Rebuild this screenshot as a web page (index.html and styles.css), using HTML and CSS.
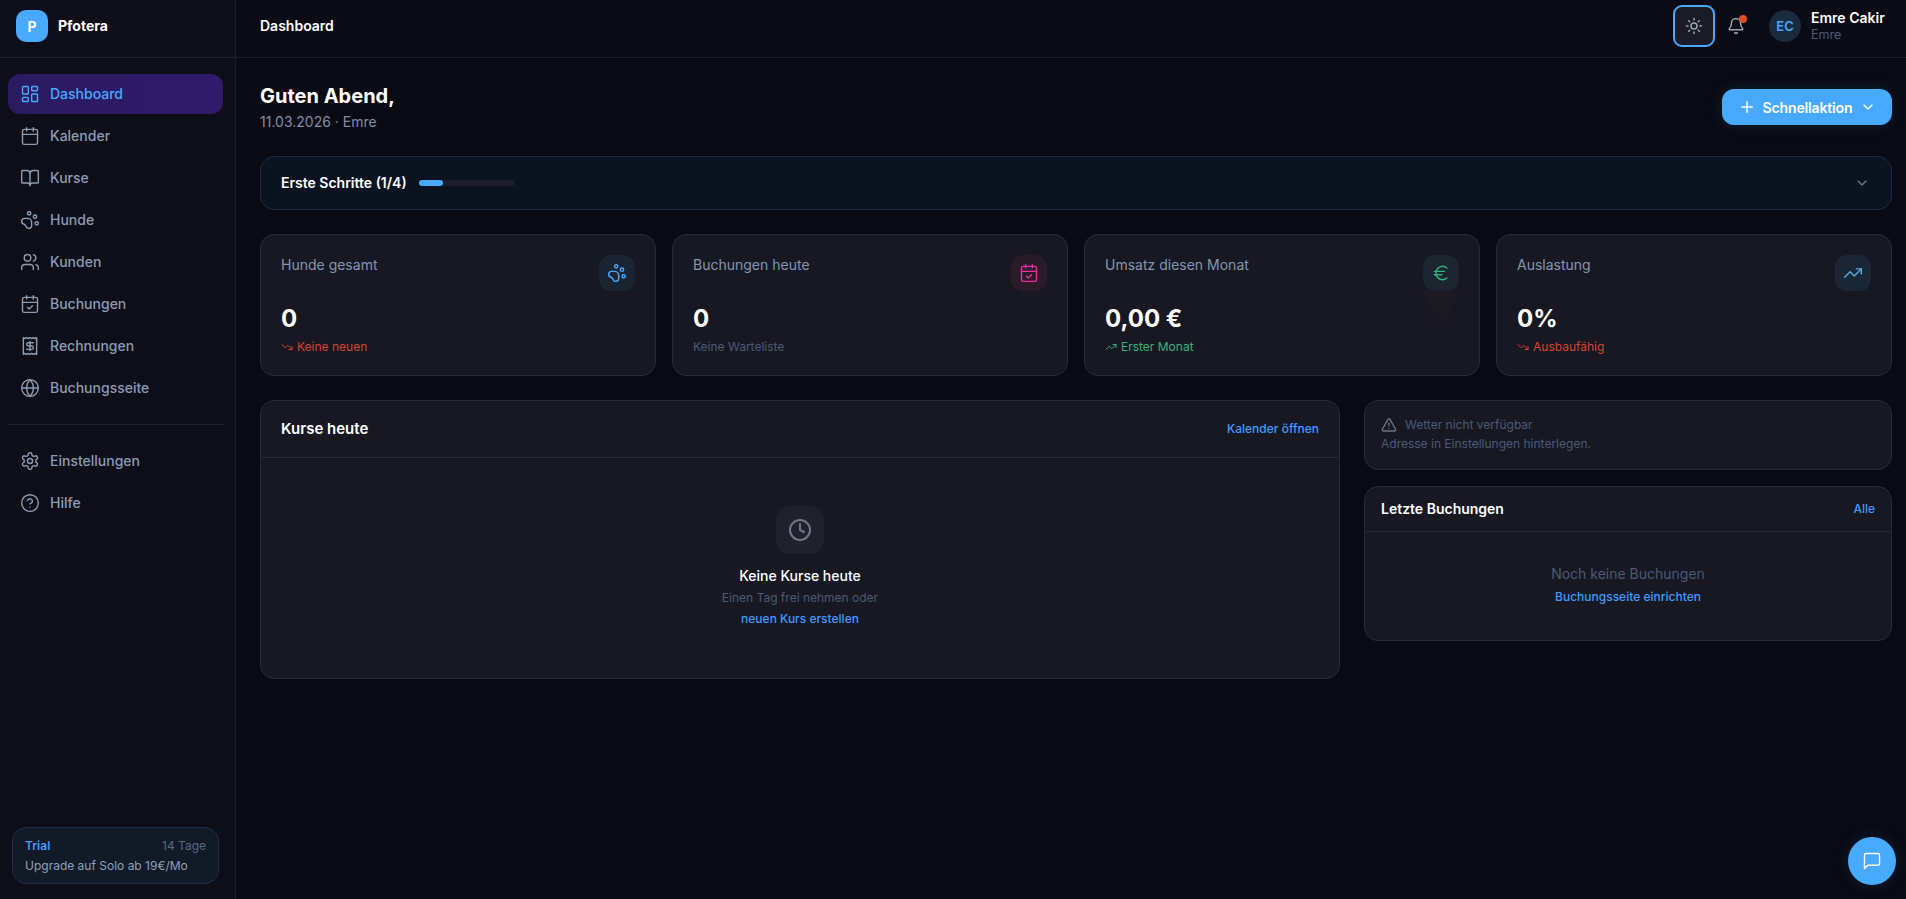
FILE: index.html
```html
<!DOCTYPE html>
<html lang="de">
<head>
<meta charset="utf-8">
<title>Pfotera – Dashboard</title>
<link rel="stylesheet" href="styles.css">
</head>
<body>
<svg class="defs" width="0" height="0" aria-hidden="true">
  <symbol id="i-dash" viewBox="0 0 24 24"><rect x="3" y="3" width="7" height="9" rx="1"/><rect x="14" y="3" width="7" height="5" rx="1"/><rect x="14" y="12" width="7" height="9" rx="1"/><rect x="3" y="16" width="7" height="5" rx="1"/></symbol>
  <symbol id="i-cal" viewBox="0 0 24 24"><path d="M8 2v4"/><path d="M16 2v4"/><rect x="3" y="4" width="18" height="18" rx="2"/><path d="M3 10h18"/></symbol>
  <symbol id="i-book" viewBox="0 0 24 24"><path d="M12 7v14"/><path d="M3 18a1 1 0 0 1-1-1V4a1 1 0 0 1 1-1h5a4 4 0 0 1 4 4 4 4 0 0 1 4-4h5a1 1 0 0 1 1 1v13a1 1 0 0 1-1 1h-6a3 3 0 0 0-3 3 3 3 0 0 0-3-3z"/></symbol>
  <symbol id="i-paw" viewBox="0 0 24 24"><circle cx="11" cy="4" r="2"/><circle cx="18" cy="8" r="2"/><circle cx="20" cy="16" r="2"/><path d="M9 10a5 5 0 0 1 5 5v3.5a3.5 3.5 0 0 1-6.84 1.045Q6.52 17.48 4.46 16.84A3.5 3.5 0 0 1 5.5 10Z"/></symbol>
  <symbol id="i-users" viewBox="0 0 24 24"><path d="M16 21v-2a4 4 0 0 0-4-4H6a4 4 0 0 0-4 4v2"/><circle cx="9" cy="7" r="4"/><path d="M22 21v-2a4 4 0 0 0-3-3.87"/><path d="M16 3.13a4 4 0 0 1 0 7.75"/></symbol>
  <symbol id="i-calcheck" viewBox="0 0 24 24"><path d="M8 2v4"/><path d="M16 2v4"/><rect x="3" y="4" width="18" height="18" rx="2"/><path d="M3 10h18"/><path d="m9 16 2 2 4-4"/></symbol>
  <symbol id="i-receipt" viewBox="0 0 24 24"><path d="M4 2v20l2-1 2 1 2-1 2 1 2-1 2 1 2-1 2 1V2l-2 1-2-1-2 1-2-1-2 1-2-1-2 1Z"/><path d="M16 8h-6a2 2 0 1 0 0 4h4a2 2 0 1 1 0 4H8"/><path d="M12 17.5v-11"/></symbol>
  <symbol id="i-globe" viewBox="0 0 24 24"><circle cx="12" cy="12" r="10"/><path d="M12 2a14.5 14.5 0 0 0 0 20 14.5 14.5 0 0 0 0-20"/><path d="M2 12h20"/></symbol>
  <symbol id="i-gear" viewBox="0 0 24 24"><path d="M12.22 2h-.44a2 2 0 0 0-2 2v.18a2 2 0 0 1-1 1.73l-.43.25a2 2 0 0 1-2 0l-.15-.08a2 2 0 0 0-2.73.73l-.22.38a2 2 0 0 0 .73 2.73l.15.1a2 2 0 0 1 1 1.72v.51a2 2 0 0 1-1 1.74l-.15.09a2 2 0 0 0-.73 2.73l.22.38a2 2 0 0 0 2.73.73l.15-.08a2 2 0 0 1 2 0l.43.25a2 2 0 0 1 1 1.73V20a2 2 0 0 0 2 2h.44a2 2 0 0 0 2-2v-.18a2 2 0 0 1 1-1.73l.43-.25a2 2 0 0 1 2 0l.15.08a2 2 0 0 0 2.73-.73l.22-.39a2 2 0 0 0-.73-2.73l-.15-.08a2 2 0 0 1-1-1.74v-.5a2 2 0 0 1 1-1.74l.15-.09a2 2 0 0 0 .73-2.73l-.22-.38a2 2 0 0 0-2.73-.73l-.15.08a2 2 0 0 1-2 0l-.43-.25a2 2 0 0 1-1-1.73V4a2 2 0 0 0-2-2z"/><circle cx="12" cy="12" r="3"/></symbol>
  <symbol id="i-help" viewBox="0 0 24 24"><circle cx="12" cy="12" r="10"/><path d="M9.09 9a3 3 0 0 1 5.83 1c0 2-3 3-3 3"/><path d="M12 17h.01"/></symbol>
  <symbol id="i-sun" viewBox="0 0 24 24"><circle cx="12" cy="12" r="4"/><path d="M12 2v2"/><path d="M12 20v2"/><path d="m4.93 4.93 1.41 1.41"/><path d="m17.66 17.66 1.41 1.41"/><path d="M2 12h2"/><path d="M20 12h2"/><path d="m6.34 17.66-1.41 1.41"/><path d="m19.07 4.93-1.41 1.41"/></symbol>
  <symbol id="i-bell" viewBox="0 0 24 24"><path d="M10.268 21a2 2 0 0 0 3.464 0"/><path d="M3.262 15.326A1 1 0 0 0 4 17h16a1 1 0 0 0 .74-1.673C19.41 13.956 18 12.499 18 8A6 6 0 0 0 6 8c0 4.499-1.411 5.956-2.738 7.326"/></symbol>
  <symbol id="i-plus" viewBox="0 0 24 24"><path d="M5 12h14"/><path d="M12 5v14"/></symbol>
  <symbol id="i-chev" viewBox="0 0 24 24"><path d="m6 9 6 6 6-6"/></symbol>
  <symbol id="i-up" viewBox="0 0 24 24"><path d="M16 7h6v6"/><path d="m22 7-8.5 8.5-5-5L2 17"/></symbol>
  <symbol id="i-down" viewBox="0 0 24 24"><path d="M16 17h6v-6"/><path d="m22 17-8.5-8.5-5 5L2 7"/></symbol>
  <symbol id="i-euro" viewBox="0 0 24 24"><path d="M4 10h12"/><path d="M4 14h9"/><path d="M19 6a7.7 7.7 0 0 0-5.2-2A7.9 7.9 0 0 0 6 12c0 4.4 3.5 8 7.8 8 2 0 3.8-.8 5.2-2"/></symbol>
  <symbol id="i-clock" viewBox="0 0 24 24"><circle cx="12" cy="12" r="10"/><path d="M12 6v6l4 2"/></symbol>
  <symbol id="i-alert" viewBox="0 0 24 24"><path d="m21.73 18-8-14a2 2 0 0 0-3.48 0l-8 14A2 2 0 0 0 4 21h16a2 2 0 0 0 1.73-3"/><path d="M12 9v4"/><path d="M12 17h.01"/></symbol>
  <symbol id="i-msg" viewBox="0 0 24 24"><path d="M21 15a2 2 0 0 1-2 2H7l-4 4V5a2 2 0 0 1 2-2h14a2 2 0 0 1 2 2z"/></symbol>
</svg>

<div class="app">
  <aside class="sidebar">
    <div class="brand">
      <span class="brand-logo">P</span>
      <span class="brand-name">Pfotera</span>
    </div>
    <div class="side-body">
      <nav class="nav">
        <a class="nav-item is-active"><svg class="icon icon-20"><use href="#i-dash"/></svg>Dashboard</a>
        <a class="nav-item"><svg class="icon icon-20"><use href="#i-cal"/></svg>Kalender</a>
        <a class="nav-item"><svg class="icon icon-20"><use href="#i-book"/></svg>Kurse</a>
        <a class="nav-item"><svg class="icon icon-20"><use href="#i-paw"/></svg>Hunde</a>
        <a class="nav-item"><svg class="icon icon-20"><use href="#i-users"/></svg>Kunden</a>
        <a class="nav-item"><svg class="icon icon-20"><use href="#i-calcheck"/></svg>Buchungen</a>
        <a class="nav-item"><svg class="icon icon-20"><use href="#i-receipt"/></svg>Rechnungen</a>
        <a class="nav-item"><svg class="icon icon-20"><use href="#i-globe"/></svg>Buchungsseite</a>
      </nav>
      <div class="nav-divider"></div>
      <nav class="nav">
        <a class="nav-item"><svg class="icon icon-20"><use href="#i-gear"/></svg>Einstellungen</a>
        <a class="nav-item"><svg class="icon icon-20"><use href="#i-help"/></svg>Hilfe</a>
      </nav>
      <div class="trial">
        <div class="trial-top"><strong>Trial</strong><span>14 Tage</span></div>
        <div class="trial-text">Upgrade auf Solo ab 19€/Mo</div>
      </div>
    </div>
  </aside>

  <div class="main">
    <header class="topbar">
      <div class="topbar-title">Dashboard</div>
      <div class="topbar-actions">
        <button class="theme-btn"><svg class="icon icon-18"><use href="#i-sun"/></svg></button>
        <button class="bell-btn"><svg class="icon icon-18"><use href="#i-bell"/></svg><span class="bell-dot"></span></button>
        <div class="user">
          <span class="avatar">EC</span>
          <div class="user-text">
            <div class="user-name">Emre Cakir</div>
            <div class="user-sub">Emre</div>
          </div>
        </div>
      </div>
    </header>

    <main class="content">
      <section class="greeting">
        <div>
          <h1>Guten Abend,</h1>
          <p>11.03.2026 · Emre</p>
        </div>
        <button class="quick-btn">
          <svg class="icon icon-18"><use href="#i-plus"/></svg>
          <span class="quick-label">Schnellaktion</span>
          <svg class="icon icon-16"><use href="#i-chev"/></svg>
        </button>
      </section>

      <section class="onboarding">
        <div class="onboarding-left">
          <span class="onboarding-title">Erste Schritte (1/4)</span>
          <span class="progress"><span class="progress-fill"></span></span>
        </div>
        <svg class="icon icon-16 onboarding-chev"><use href="#i-chev"/></svg>
      </section>

      <section class="stats">
        <article class="stat">
          <div class="stat-head"><span class="stat-title">Hunde gesamt</span><span class="stat-icon tone-blue"><svg class="icon icon-20"><use href="#i-paw"/></svg></span></div>
          <div class="stat-value">0</div>
          <div class="stat-sub sub-red"><svg class="icon icon-12"><use href="#i-down"/></svg>Keine neuen</div>
        </article>
        <article class="stat">
          <div class="stat-head"><span class="stat-title">Buchungen heute</span><span class="stat-icon tone-pink"><svg class="icon icon-20"><use href="#i-calcheck"/></svg></span></div>
          <div class="stat-value">0</div>
          <div class="stat-sub sub-muted">Keine Warteliste</div>
        </article>
        <article class="stat">
          <div class="stat-head"><span class="stat-title">Umsatz diesen Monat</span><span class="stat-icon tone-green"><svg class="icon icon-20"><use href="#i-euro"/></svg></span></div>
          <div class="stat-value">0,00 €</div>
          <div class="stat-sub sub-green"><svg class="icon icon-12"><use href="#i-up"/></svg>Erster Monat</div>
        </article>
        <article class="stat">
          <div class="stat-head"><span class="stat-title">Auslastung</span><span class="stat-icon tone-sky"><svg class="icon icon-20"><use href="#i-up"/></svg></span></div>
          <div class="stat-value">0%</div>
          <div class="stat-sub sub-red"><svg class="icon icon-12"><use href="#i-down"/></svg>Ausbaufähig</div>
        </article>
      </section>

      <section class="panels">
        <article class="card">
          <div class="card-head card-head-lg">
            <h2>Kurse heute</h2>
            <a class="link">Kalender öffnen</a>
          </div>
          <div class="empty">
            <span class="empty-icon"><svg class="icon icon-24"><use href="#i-clock"/></svg></span>
            <div class="empty-title">Keine Kurse heute</div>
            <div class="empty-sub">Einen Tag frei nehmen oder</div>
            <a class="link empty-link">neuen Kurs erstellen</a>
          </div>
        </article>

        <div class="side-col">
          <article class="card weather">
            <div class="weather-top"><svg class="icon icon-16"><use href="#i-alert"/></svg>Wetter nicht verfügbar</div>
            <div class="weather-sub">Adresse in Einstellungen hinterlegen.</div>
          </article>
          <article class="card">
            <div class="card-head card-head-sm">
              <h3>Letzte Buchungen</h3>
              <a class="link">Alle</a>
            </div>
            <div class="bookings-empty">
              <div class="bookings-text">Noch keine Buchungen</div>
              <a class="link bookings-link">Buchungsseite einrichten</a>
            </div>
          </article>
        </div>
      </section>
    </main>
  </div>
</div>

<button class="chat-btn"><svg class="icon icon-20"><use href="#i-msg"/></svg></button>
</body>
</html>
```

FILE: styles.css
```css
* { box-sizing: border-box; }

html, body {
  margin: 0;
  height: 100%;
}

body {
  background: #090a13;
  color: #fff;
  font-family: Inter, "Liberation Sans", sans-serif;
  font-size: 14px;
  overflow: hidden;
}

button {
  font: inherit;
  border: 0;
  padding: 0;
  color: inherit;
  background: none;
}

.defs { position: absolute; }

.icon {
  flex: none;
  display: block;
  fill: none;
  stroke: currentColor;
  stroke-width: 2;
  stroke-linecap: round;
  stroke-linejoin: round;
}
.icon-12 { width: 12px; height: 12px; }
.icon-16 { width: 16px; height: 16px; }
.icon-18 { width: 18px; height: 18px; }
.icon-20 { width: 20px; height: 20px; stroke-width: 1.7; }
.icon-24 { width: 24px; height: 24px; }

.app {
  display: flex;
  height: 100vh;
}

/* Sidebar */
.sidebar {
  flex: 0 0 236px;
  display: flex;
  flex-direction: column;
  background: #0d0e17;
  border-right: 1px solid #1c1d28;
}

.brand {
  height: 58px;
  flex: none;
  display: flex;
  align-items: center;
  gap: 10px;
  padding: 0 0 5px 16px;
  border-bottom: 1px solid #20212c;
}

.brand-logo {
  width: 32px;
  height: 32px;
  border-radius: 10px;
  background: #47aaff;
  display: flex;
  align-items: center;
  justify-content: center;
  font-weight: 700;
  font-size: 14px;
}

.brand-name {
  margin-bottom: 2px;
  font-weight: 700;
  font-size: 14px;
}

.side-body {
  flex: 1;
  display: flex;
  flex-direction: column;
  padding: 16px 12px 15px 8px;
}

.nav {
  display: flex;
  flex-direction: column;
  gap: 2px;
}

.nav-item {
  height: 40px;
  display: flex;
  align-items: center;
  gap: 10px;
  padding: 0 12px 1px;
  border-radius: 12px;
  color: #8b9bb4;
  font-weight: 500;
  font-size: 14px;
}

.nav-item.is-active {
  color: #47aaff;
  background: linear-gradient(90deg, #2a1b60, #301a6b);
}

.nav-divider {
  height: 1px;
  background: #20212c;
  margin: 16px 0;
}

.trial {
  margin: auto 4px 0;
  height: 57px;
  padding: 10px 12px;
  border-radius: 14px;
  background: #121a28;
  border: 1px solid #1b2e47;
  font-size: 12px;
}

.trial-top {
  display: flex;
  justify-content: space-between;
  line-height: 16px;
  color: #5a6780;
}

.trial-top strong {
  color: #3f9bff;
  font-weight: 600;
}

.trial-text {
  margin-top: 4px;
  line-height: 16px;
  color: #8ba0bd;
}

/* Top bar */
.main {
  flex: 1;
  min-width: 0;
  display: flex;
  flex-direction: column;
}

.topbar {
  height: 58px;
  flex: none;
  display: flex;
  align-items: center;
  justify-content: space-between;
  padding: 0 14px 5px 24px;
  background: #0a0b14;
  border-bottom: 1px solid #1c1d28;
}

.topbar-title {
  margin-bottom: 2px;
  font-weight: 600;
  font-size: 14px;
}

.topbar-actions {
  display: flex;
  align-items: center;
}

.theme-btn {
  width: 42px;
  height: 42px;
  display: flex;
  align-items: center;
  justify-content: center;
  border-radius: 9px;
  border: 2px solid #47aaff;
  background: #1a1b26;
  color: #9aa6b8;
}

.bell-btn {
  position: relative;
  width: 36px;
  height: 36px;
  margin-left: 3px;
  display: flex;
  align-items: center;
  justify-content: center;
  color: #9aa6b8;
}

.bell-dot {
  position: absolute;
  top: 7px;
  right: 7px;
  width: 8px;
  height: 8px;
  border-radius: 50%;
  background: #d9502e;
}

.user {
  display: flex;
  align-items: center;
  gap: 10px;
  margin-left: 15px;
  width: 123px;
}

.avatar {
  width: 32px;
  height: 32px;
  border-radius: 50%;
  background: #1a2a3f;
  color: #47aaff;
  display: flex;
  align-items: center;
  justify-content: center;
  font-weight: 600;
  font-size: 13px;
}

.user-name {
  font-weight: 600;
  font-size: 14px;
  line-height: 17px;
}

.user-sub {
  margin-top: 1px;
  font-size: 12.5px;
  line-height: 16px;
  color: #4d5a78;
}

/* Content */
.content {
  flex: 1;
  display: flex;
  flex-direction: column;
  gap: 24px;
  padding: 24px 14px 0 24px;
}

.greeting {
  display: flex;
  align-items: center;
  justify-content: space-between;
}

.greeting h1 {
  margin: 0;
  font-size: 20px;
  line-height: 28px;
  font-weight: 700;
}

.greeting p {
  margin: 2px 0 0;
  font-size: 14px;
  line-height: 20px;
  color: #7f8ea5;
}

.quick-btn {
  width: 170px;
  height: 36px;
  display: flex;
  align-items: center;
  justify-content: center;
  gap: 8px;
  border-radius: 12px;
  background: #47aaff;
  color: #fff;
  font-weight: 600;
  font-size: 14px;
  box-shadow: 0 0 14px rgba(71, 170, 255, .16);
}

.quick-label {
  margin-left: -1px;
  letter-spacing: -.15px;
}

.onboarding {
  height: 54px;
  display: flex;
  align-items: center;
  justify-content: space-between;
  padding: 0 21px 1px 20px;
  border-radius: 14px;
  background: #0c1320;
  border: 1px solid #1a2c44;
}

.onboarding-left {
  display: flex;
  align-items: center;
  gap: 12px;
}

.onboarding-title {
  font-weight: 600;
  font-size: 14px;
}

.progress {
  display: block;
  width: 96px;
  height: 6px;
  border-radius: 3px;
  background: #1c1d28;
}

.progress-fill {
  display: block;
  width: 24px;
  height: 6px;
  border-radius: 3px;
  background: #47aaff;
}

.onboarding-chev { color: #6b778c; }

.stats {
  display: grid;
  grid-template-columns: repeat(4, 1fr);
  gap: 16px;
}

.stat {
  position: relative;
  height: 142px;
  padding: 20px;
  border-radius: 14px;
  background: #171821;
  border: 1px solid #2a2b36;
}

.stat-head {
  display: flex;
  justify-content: space-between;
  height: 36px;
}

.stat-title {
  font-size: 14px;
  line-height: 20px;
  color: #8197b5;
}

.stat-icon {
  position: relative;
  width: 36px;
  height: 36px;
  border-radius: 12px;
  display: flex;
  align-items: center;
  justify-content: center;
}

.tone-blue { background: #1a2433; color: #47aaff; }
.tone-pink { background: #2a1b29; color: #ec2d9a; }
.tone-green { background: #1b2630; color: #2fb67a; }
.tone-sky { background: #1c2735; color: #5aa9e6; }

.tone-green::after {
  content: "";
  position: absolute;
  top: 36px;
  left: 0;
  width: 36px;
  height: 33px;
  background: linear-gradient(#1d1a24, #191821);
  clip-path: polygon(0 0, 100% 0, 58% 100%, 42% 100%);
}

.stat-value {
  margin-top: 12px;
  font-size: 24px;
  line-height: 32px;
  font-weight: 700;
}

.stat-sub {
  margin-top: 4px;
  display: flex;
  align-items: center;
  gap: 4px;
  font-size: 12px;
  line-height: 16px;
}

.sub-red { color: #d9432e; }
.sub-green { color: #2fb67a; }
.sub-muted { color: #4d5a78; }

.panels {
  display: grid;
  grid-template-columns: 1fr 528px;
  gap: 24px;
  align-items: start;
}

.card {
  border-radius: 14px;
  background: #171821;
  border: 1px solid #2a2b36;
}

.card-head {
  display: flex;
  align-items: center;
  justify-content: space-between;
  border-bottom: 1px solid #2a2b36;
}

.card-head-lg {
  height: 57px;
  padding: 0 20px 1px;
}

.card-head-sm {
  height: 45px;
  padding: 0 16px 1px;
}

.card-head h2 {
  margin: 0;
  font-size: 15px;
  font-weight: 600;
}

.card-head h3 {
  margin: 0;
  font-size: 14px;
  font-weight: 600;
}

.link {
  color: #3f9bff;
  font-size: 12px;
  font-weight: 500;
}

.empty {
  display: flex;
  flex-direction: column;
  align-items: center;
  padding: 48px 0 49px;
}

.empty-icon {
  width: 48px;
  height: 48px;
  border-radius: 14px;
  background: #20212c;
  color: #6c7688;
  display: flex;
  align-items: center;
  justify-content: center;
}

.empty-title {
  margin-top: 12px;
  font-size: 14px;
  line-height: 20px;
  font-weight: 500;
}

.empty-sub {
  margin-top: 2px;
  font-size: 12px;
  line-height: 20px;
  color: #4d5a78;
}

.empty-link {
  margin-top: 1px;
  line-height: 20px;
}

.side-col {
  display: flex;
  flex-direction: column;
  gap: 16px;
}

.weather {
  height: 70px;
  padding: 16px;
  font-size: 12px;
  color: #4d5a78;
}

.weather-top {
  display: flex;
  align-items: center;
  gap: 8px;
  line-height: 16px;
}

.weather-top .icon { color: #6c7688; }

.weather-sub {
  margin-top: 3px;
  line-height: 16px;
}

.bookings-empty {
  display: flex;
  flex-direction: column;
  align-items: center;
  padding: 32px 0 33px;
}

.bookings-text {
  font-size: 14px;
  line-height: 20px;
  color: #4d5a78;
}

.bookings-link {
  margin-top: 3px;
  line-height: 20px;
}

.chat-btn {
  position: fixed;
  right: 10px;
  bottom: 14px;
  width: 48px;
  height: 48px;
  border-radius: 50%;
  background: #47aaff;
  color: #fff;
  display: flex;
  align-items: center;
  justify-content: center;
  box-shadow: 0 0 16px rgba(71, 170, 255, .14);
}
```
